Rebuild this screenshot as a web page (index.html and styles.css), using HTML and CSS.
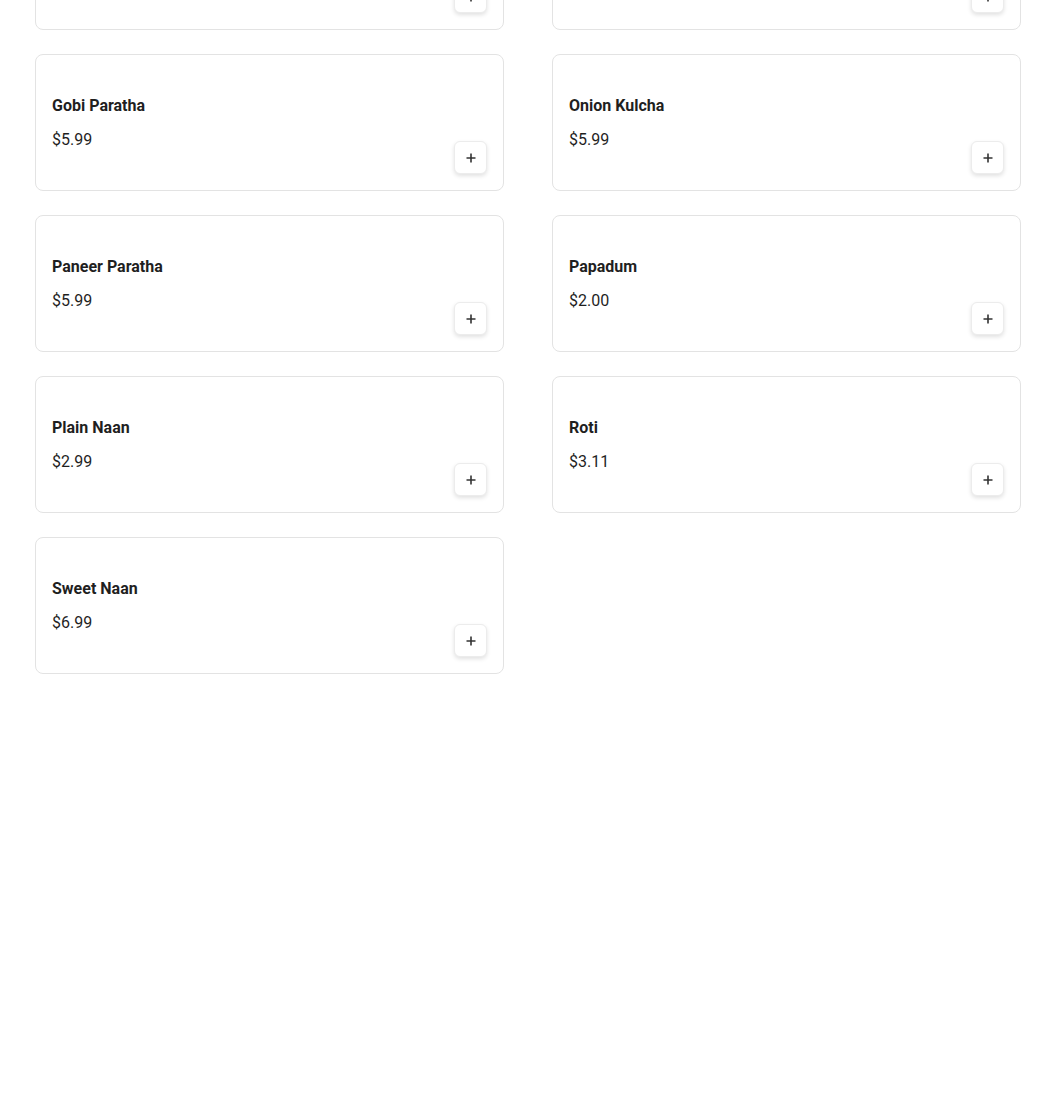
FILE: index.html
```html
<!DOCTYPE html>
<html>
<head>
<meta charset="utf-8">
<link rel="stylesheet" href="styles.css">
</head>
<body>
<div class="grid">
  <div class="card"><div class="info"><div class="name">Garlic Naan</div><div class="price">$3.99</div></div><button class="add"><svg viewBox="0 0 12 12" width="12" height="12"><path d="M6 1.5v9M1.5 6h9" stroke="#333" stroke-width="1.6" fill="none"/></svg></button></div>
  <div class="card"><div class="info"><div class="name">Lachha Paratha</div><div class="price">$3.99</div></div><button class="add"><svg viewBox="0 0 12 12" width="12" height="12"><path d="M6 1.5v9M1.5 6h9" stroke="#333" stroke-width="1.6" fill="none"/></svg></button></div>
  <div class="card"><div class="info"><div class="name">Gobi Paratha</div><div class="price">$5.99</div></div><button class="add"><svg viewBox="0 0 12 12" width="12" height="12"><path d="M6 1.5v9M1.5 6h9" stroke="#333" stroke-width="1.6" fill="none"/></svg></button></div>
  <div class="card"><div class="info"><div class="name">Onion Kulcha</div><div class="price">$5.99</div></div><button class="add"><svg viewBox="0 0 12 12" width="12" height="12"><path d="M6 1.5v9M1.5 6h9" stroke="#333" stroke-width="1.6" fill="none"/></svg></button></div>
  <div class="card"><div class="info"><div class="name">Paneer Paratha</div><div class="price">$5.99</div></div><button class="add"><svg viewBox="0 0 12 12" width="12" height="12"><path d="M6 1.5v9M1.5 6h9" stroke="#333" stroke-width="1.6" fill="none"/></svg></button></div>
  <div class="card"><div class="info"><div class="name">Papadum</div><div class="price">$2.00</div></div><button class="add"><svg viewBox="0 0 12 12" width="12" height="12"><path d="M6 1.5v9M1.5 6h9" stroke="#333" stroke-width="1.6" fill="none"/></svg></button></div>
  <div class="card"><div class="info"><div class="name">Plain Naan</div><div class="price">$2.99</div></div><button class="add"><svg viewBox="0 0 12 12" width="12" height="12"><path d="M6 1.5v9M1.5 6h9" stroke="#333" stroke-width="1.6" fill="none"/></svg></button></div>
  <div class="card"><div class="info"><div class="name">Roti</div><div class="price">$3.11</div></div><button class="add"><svg viewBox="0 0 12 12" width="12" height="12"><path d="M6 1.5v9M1.5 6h9" stroke="#333" stroke-width="1.6" fill="none"/></svg></button></div>
  <div class="card"><div class="info"><div class="name">Sweet Naan</div><div class="price">$6.99</div></div><button class="add"><svg viewBox="0 0 12 12" width="12" height="12"><path d="M6 1.5v9M1.5 6h9" stroke="#333" stroke-width="1.6" fill="none"/></svg></button></div>
</div>
</body>
</html>
```
FILE: styles.css
```css
html, body {
  margin: 0;
  padding: 0;
  background: #fff;
}
body {
  font-family: Roboto, "Liberation Sans", sans-serif;
  color: #222;
}
.grid {
  display: grid;
  grid-template-columns: 469px 469px;
  column-gap: 48px;
  row-gap: 24px;
  margin-top: -107px;
  padding-left: 35px;
}
.card {
  box-sizing: border-box;
  height: 137px;
  border: 1px solid #e3e3e3;
  border-radius: 8px;
  padding: 16px;
  display: flex;
  justify-content: space-between;
  align-items: flex-end;
  background: #fff;
}
.info {
  align-self: flex-start;
  padding-top: 24px;
}
.name {
  font-size: 16px;
  line-height: 22px;
  font-weight: 700;
  color: #1f1f1f;
}
.price {
  margin-top: 11px;
  font-size: 16px;
  line-height: 24px;
  font-weight: 400;
  color: #1f1f1f;
}
.add {
  box-sizing: border-box;
  width: 33px;
  height: 33px;
  border: 1px solid #ececec;
  border-radius: 6px;
  background: #fff;
  box-shadow: 0 2px 4px rgba(0,0,0,0.12);
  display: flex;
  align-items: center;
  justify-content: center;
  padding: 0;
  margin-bottom: 0;
  margin-right: 0;
}
.add svg { display: block; }
```
